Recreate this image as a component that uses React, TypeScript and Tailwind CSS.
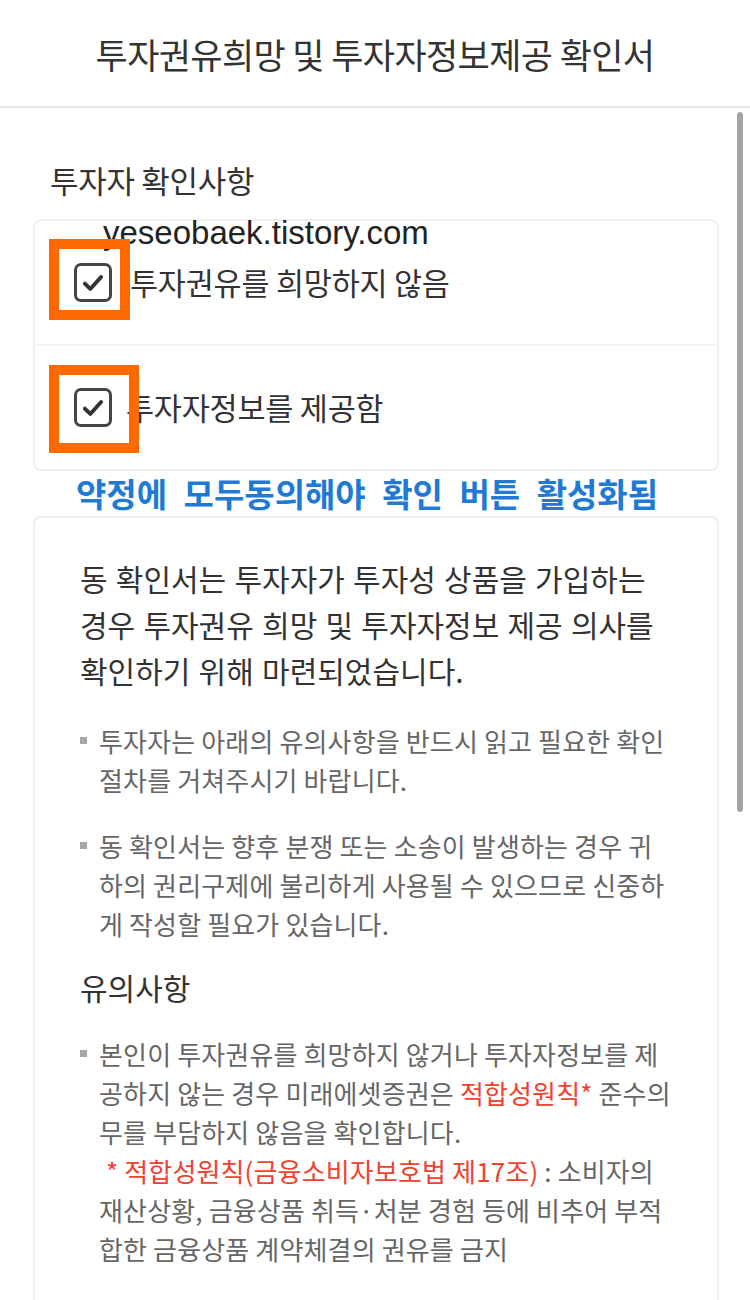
import React from "react"

const FONT = '"Noto Sans CJK KR", "Noto Sans", "Liberation Sans", sans-serif'

const CheckBox = () => (
  <div className="w-[38px] h-[39px] shrink-0 border-[3px] border-[#444] rounded-[7px] flex items-center justify-center">
    <svg width="26" height="26" viewBox="0 0 24 24" fill="none">
      <polyline
        points="4.5,12.5 9.5,17.5 19.5,6.5"
        stroke="#333"
        strokeWidth="3.6"
        strokeLinecap="round"
        strokeLinejoin="round"
      />
    </svg>
  </div>
)

const Bullet = ({ children }: { children: React.ReactNode }) => (
  <div className="flex">
    <div className="w-[19px] shrink-0 pt-[16px]">
      <div className="w-[7px] h-[7px] bg-[#a8a8a8]" />
    </div>
    <div className="text-[26px] leading-[39px] tracking-[0.15px] text-[#666] whitespace-nowrap">
      {children}
    </div>
  </div>
)

const Red = ({ children }: { children: React.ReactNode }) => (
  <span className="text-[#f0412f]">{children}</span>
)

export default function App() {
  return (
    <div className="relative w-[750px] min-h-[1300px] bg-white overflow-hidden" style={{ fontFamily: FONT }}>
      {/* Header */}
      <div className="h-[108px] border-b-2 border-[#e4e4e4] flex items-center justify-center pt-[2px]">
        <h1 className="text-[35px] tracking-[-0.6px] text-[#333] font-normal m-0">
          투자권유희망 및 투자자정보제공 확인서
        </h1>
      </div>

      <div className="pl-[33px] pr-[31px]">
        <h2 className="pl-[17px] pt-[52px] text-[31px] leading-[40px] tracking-[-0.3px] text-[#333] font-normal m-0">
          투자자 확인사항
        </h2>

        {/* Checkbox card */}
        <div className="mt-[19px] border-2 border-[#efefef] rounded-[8px]">
          <div className="h-[125px] flex items-center gap-[18px] pl-[39px] border-b-2 border-[#f2f2f2]">
            <CheckBox />
            <span className="text-[30.5px] tracking-[-0.2px] text-[#333]">투자권유를 희망하지 않음</span>
          </div>
          <div className="h-[123px] flex items-center gap-[14px] pl-[39px]">
            <CheckBox />
            <span className="text-[30.5px] tracking-[-0.2px] text-[#333]">투자자정보를 제공함</span>
          </div>
        </div>

        {/* Annotation */}
        <div className="h-[45px] flex items-center pl-[43px]">
          <span className="text-[33px] leading-none font-bold text-[#1f7ad6] [word-spacing:9px] whitespace-nowrap">
            약정에 모두동의해야 확인 버튼 활성화됨
          </span>
        </div>

        {/* Notice card */}
        <div className="border-2 border-[#efefef] border-b-0 rounded-t-[8px] pl-[45px] pt-[37px] pb-[40px]">
          <div className="text-[30px] leading-[46px] text-[#333] [word-spacing:1.5px] whitespace-nowrap">
            <div>동 확인서는 투자자가 투자성 상품을 가입하는</div>
            <div>경우 투자권유 희망 및 투자자정보 제공 의사를</div>
            <div>확인하기 위해 마련되었습니다.</div>
          </div>

          <div className="mt-[28px] flex flex-col gap-[27px]">
            <Bullet>
              <div>투자자는 아래의 유의사항을 반드시 읽고 필요한 확인</div>
              <div>절차를 거쳐주시기 바랍니다.</div>
            </Bullet>
            <Bullet>
              <div>동 확인서는 향후 분쟁 또는 소송이 발생하는 경우 귀</div>
              <div>하의 권리구제에 불리하게 사용될 수 있으므로 신중하</div>
              <div>게 작성할 필요가 있습니다.</div>
            </Bullet>
          </div>

          <h3 className="mt-[24px] text-[30px] leading-[40px] text-[#333] font-normal m-0">유의사항</h3>

          <div className="mt-[27px]">
            <Bullet>
              <div>본인이 투자권유를 희망하지 않거나 투자자정보를 제</div>
              <div>
                공하지 않는 경우 미래에셋증권은 <Red>적합성원칙*</Red> 준수의
              </div>
              <div>무를 부담하지 않음을 확인합니다.</div>
              <div className="pl-[7px]">
                <Red>* 적합성원칙(금융소비자보호법 제17조)</Red> : 소비자의
              </div>
              <div>재산상황, 금융상품 취득·처분 경험 등에 비추어 부적</div>
              <div>합한 금융상품 계약체결의 권유를 금지</div>
            </Bullet>
          </div>
        </div>
      </div>

      {/* Scrollbar */}
      <div className="absolute right-[7px] top-[112px] w-[6px] h-[700px] rounded-full bg-[#a5a5a5]" />

      {/* Watermark */}
      <div
        className="absolute left-[103px] top-[216px] text-[33px] leading-none text-[#222] whitespace-nowrap"
        style={{ fontFamily: '"Liberation Sans", Arial, sans-serif' }}
      >
        yeseobaek.tistory.com
      </div>

      {/* Highlight boxes */}
      <div className="absolute left-[49px] top-[239px] w-[81px] h-[81px] border-[10px] border-[#ff6a00]" />
      <div className="absolute left-[49px] top-[365px] w-[90px] h-[88px] border-[10px] border-[#ff6a00]" />
    </div>
  )
}
